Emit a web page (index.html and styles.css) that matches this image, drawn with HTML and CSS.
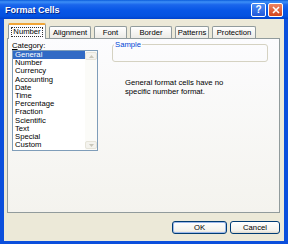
FILE: index.html
```html
<!DOCTYPE html>
<html lang="en">
<head>
    <meta charset="UTF-8">
    <meta name="viewport" content="width=device-width, initial-scale=1.0">
    <title>Format Cells</title>
    <link rel="stylesheet" href="styles.css">
</head>
<body>
    <div class="window">
        <div class="titlebar">
            <span class="title">Format Cells</span>
            <span class="tbtn help">?</span>
            <span class="tbtn close">
                <svg width="8" height="8" viewBox="0 0 8 8"><path d="M1 1L7 7M7 1L1 7" stroke="#fff" stroke-width="1.6"/></svg>
            </span>
        </div>
        <div class="frame">
            <div class="tabs">
                <div class="tab active w-number"><span class="focus">Number</span></div>
                <div class="tab w-align">Alignment</div>
                <div class="tab w-font">Font</div>
                <div class="tab w-border">Border</div>
                <div class="tab w-patterns">Patterns</div>
                <div class="tab w-protect">Protection</div>
            </div>
            <div class="panel">
                <div class="left">
                    <div class="label"><u>C</u>ategory:</div>
                    <div class="listbox">
                        <ul class="items">
                            <li class="selected">General</li>
                            <li>Number</li>
                            <li>Currency</li>
                            <li>Accounting</li>
                            <li>Date</li>
                            <li>Time</li>
                            <li>Percentage</li>
                            <li>Fraction</li>
                            <li>Scientific</li>
                            <li>Text</li>
                            <li>Special</li>
                            <li>Custom</li>
                        </ul>
                        <div class="scrollbar">
                            <span class="arrow">
                                <svg width="5" height="3" viewBox="0 0 5 3"><path d="M0 3L2.5 0L5 3Z" fill="#C9C7BA"/></svg>
                            </span>
                            <span class="arrow">
                                <svg width="5" height="3" viewBox="0 0 5 3"><path d="M0 0L2.5 3L5 0Z" fill="#C9C7BA"/></svg>
                            </span>
                        </div>
                    </div>
                </div>
                <div class="right">
                    <fieldset class="sample">
                        <legend>Sample</legend>
                        <div class="sample-body"></div>
                    </fieldset>
                    <p class="desc">General format cells have no<br>specific number format.</p>
                </div>
            </div>
            <div class="actions">
                <button class="btn ok">OK</button>
                <button class="btn cancel">Cancel</button>
            </div>
        </div>
    </div>
</body>
</html>
```

FILE: styles.css
```css
body{
    margin: 0;
    font-family: "Liberation Sans", Arial, sans-serif;
    font-size: 7.7px;
    color: #000;
}
.window{
    width: 288px;
    height: 244px;
    display: flex;
    flex-direction: column;
    background: #ECE9D8;
}
.titlebar{
    height: 19px;
    flex: none;
    display: flex;
    align-items: center;
    padding: 0 5px 0 5px;
    background: linear-gradient(#0A5CDB 0%, #3D8FF7 10%, #1A66EC 25%, #0756E6 55%, #0452E0 85%, #0042CC 100%);
}
.title{
    flex: 1;
    color: #fff;
    font-weight: bold;
    font-size: 9px;
    text-shadow: 1px 1px #0A2A8A;
}
.tbtn{
    width: 15px;
    height: 14px;
    box-sizing: border-box;
    margin-left: 2px;
    border: 1px solid #fff;
    border-radius: 2px;
    display: flex;
    align-items: center;
    justify-content: center;
    color: #fff;
    font-weight: bold;
    font-size: 10px;
}
.help{
    background: linear-gradient(#4C8DF6, #2158DA);
}
.close{
    background: linear-gradient(#EE8463, #D2461E);
}
.frame{
    flex: 1;
    display: flex;
    flex-direction: column;
    border: 4px solid #0B4FDC;
    border-top: none;
    border-bottom-width: 3px;
}
.tabs{
    position: relative;
    z-index: 1;
    height: 15px;
    margin: 4px 0 0 4px;
    display: flex;
    align-items: flex-end;
    gap: 3px;
}
.tab{
    height: 12px;
    box-sizing: border-box;
    border: 1px solid #919B9C;
    border-bottom: none;
    border-radius: 2px 2px 0 0;
    background: linear-gradient(#FFFFFF, #ECEBE6);
    display: flex;
    align-items: center;
    justify-content: center;
}
.tab.active{
    height: 16px;
    margin-bottom: -1px;
    border-top: 2px solid #F0A537;
    background: #FCFCFE;
}
.focus{
    border: 1px dotted #333;
    padding: 0 1px;
    line-height: 8px;
}
.w-number{ width: 38px; }
.w-align{ width: 42px; }
.w-font{ width: 33px; }
.w-border{ width: 42px; }
.w-patterns{ width: 34px; }
.w-protect{ width: 44px; }
.panel{
    height: 175px;
    box-sizing: border-box;
    margin: 0 4px 0 3px;
    border: 1px solid #919B9C;
    background: linear-gradient(#FCFCFE, #F4F3EE);
    padding: 2px 0 0 4px;
    display: flex;
    gap: 14px;
}
.left{
    width: 86px;
}
.label{
    line-height: 9px;
}
.listbox{
    height: 101px;
    box-sizing: border-box;
    border: 1px solid #7F9DB9;
    background: #fff;
    display: flex;
}
.items{
    flex: 1;
    margin: 0;
    padding: 0;
    list-style: none;
}
.items li{
    height: 8.2px;
    line-height: 8.2px;
    padding-left: 2px;
}
.items li.selected{
    background: #316AC5;
    color: #fff;
}
.scrollbar{
    width: 12px;
    display: flex;
    flex-direction: column;
    justify-content: space-between;
    background: #FBFBF8;
}
.arrow{
    height: 8px;
    margin: 1px 0;
    box-sizing: border-box;
    border: 1px solid #E6E4D9;
    border-radius: 2px;
    background: #F4F3EE;
    display: flex;
    align-items: center;
    justify-content: center;
}
.right{
    width: 156px;
    margin-top: -1px;
}
.sample{
    margin: 0;
    padding: 0;
    border: 1px solid #D5D2C2;
    border-radius: 3px;
}
.sample legend{
    margin-left: 1px;
    padding: 0 1px;
    line-height: 9px;
    color: #0046D5;
}
.sample-body{
    height: 12px;
}
.desc{
    margin: 16px 0 0 13px;
    line-height: 9px;
}
.actions{
    flex: 1;
    display: flex;
    justify-content: flex-end;
    align-items: flex-start;
    gap: 3px;
    padding: 8px 4px 0 0;
}
.btn{
    height: 13px;
    padding: 0;
    border: 1px solid #003C74;
    border-radius: 3px;
    background: linear-gradient(#FFFFFF, #F3F2EC 80%, #DCD7CB);
    font-family: "Liberation Sans", Arial, sans-serif;
    font-size: 7.7px;
    color: #000;
}
.ok{
    width: 55px;
    box-shadow: inset 0 0 0 1px #9DB9EB;
}
.cancel{
    width: 50px;
}
```
